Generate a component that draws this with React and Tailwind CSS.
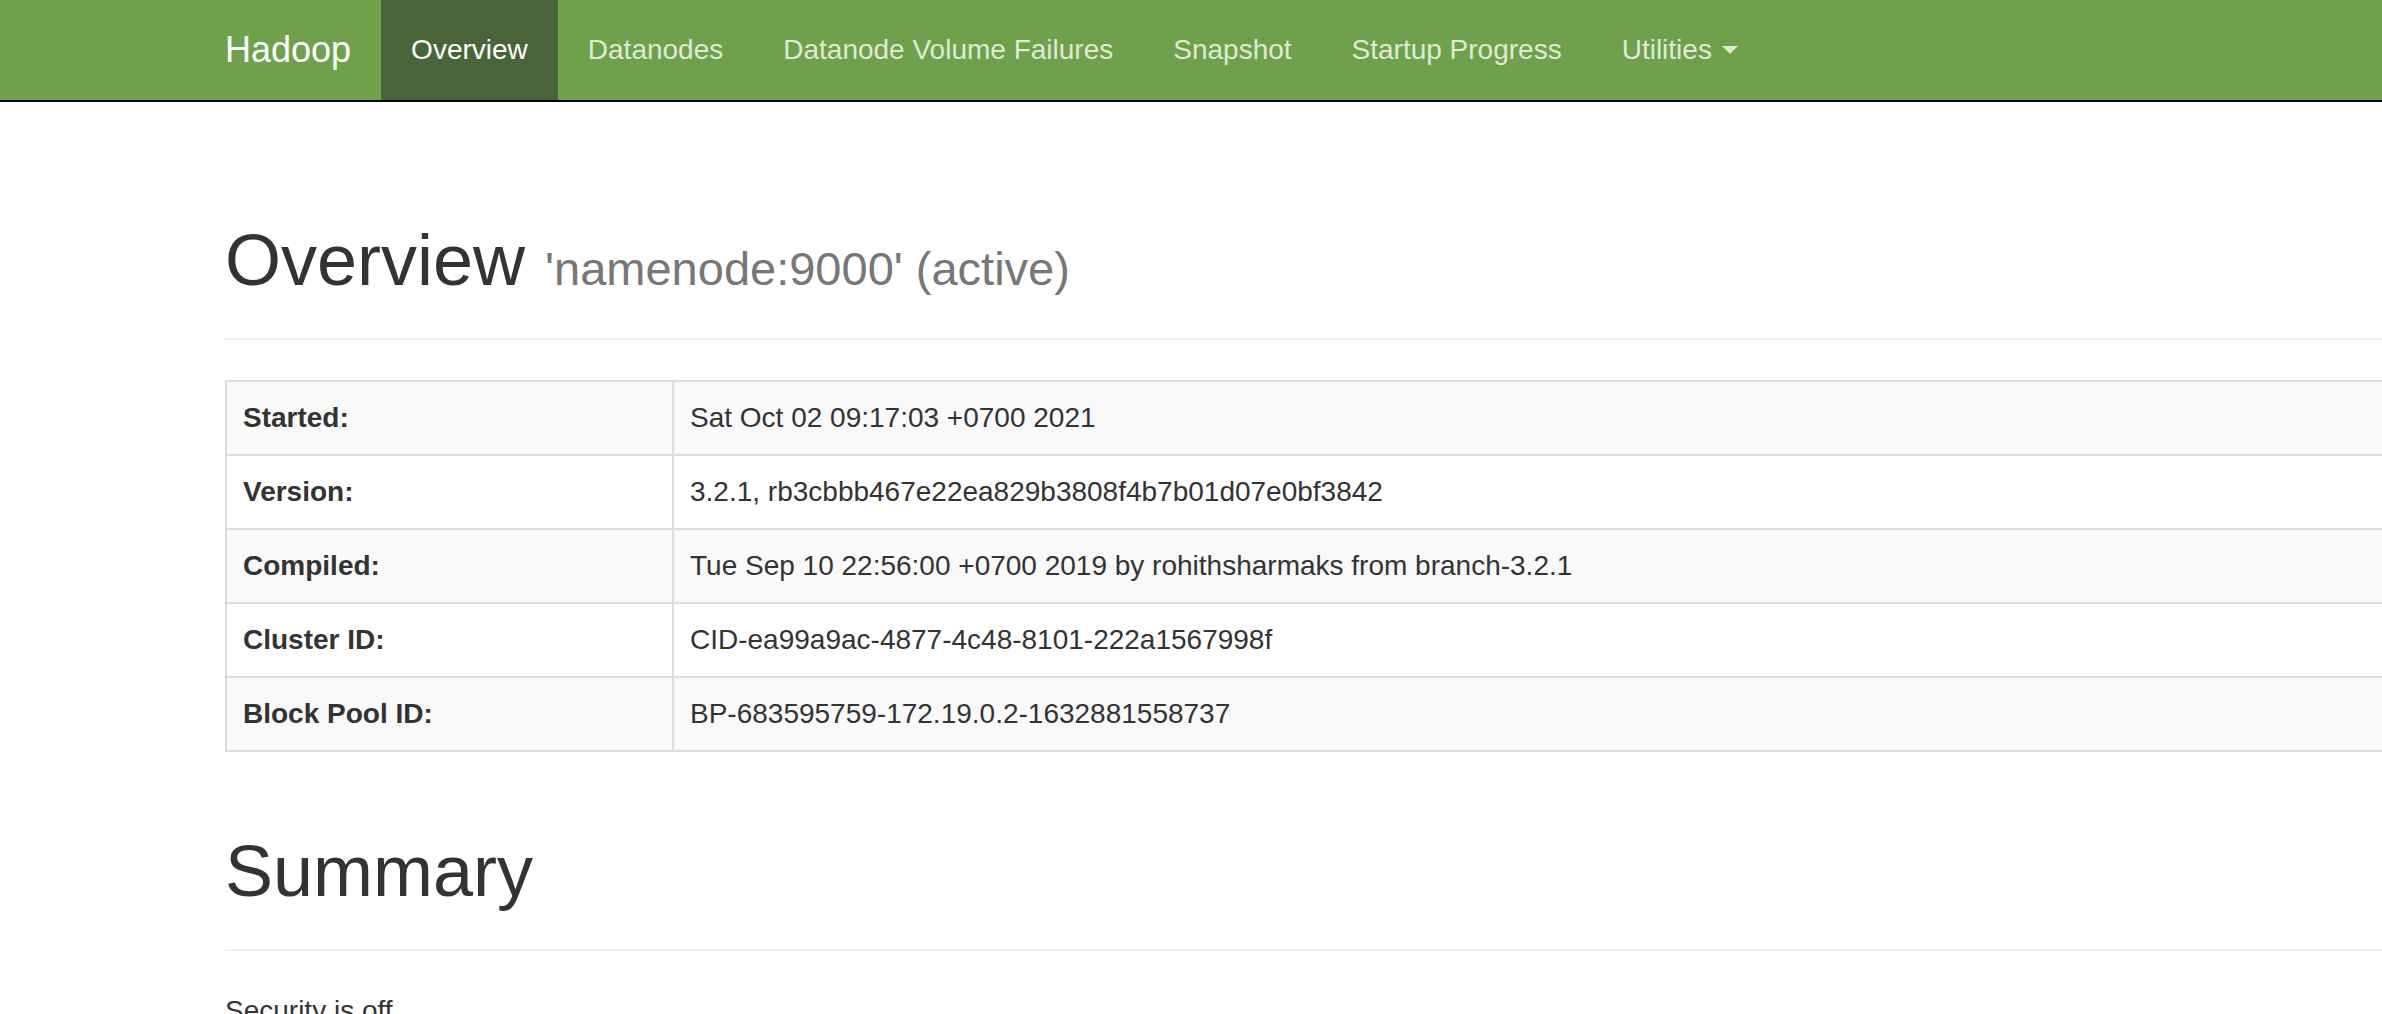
import React from 'react';

const font = "font-['Liberation_Sans',Helvetica,Arial,sans-serif]";

const navItems = [
  { label: 'Overview', active: true },
  { label: 'Datanodes' },
  { label: 'Datanode Volume Failures' },
  { label: 'Snapshot' },
  { label: 'Startup Progress' },
  { label: 'Utilities', dropdown: true },
];

const info = [
  ['Started:', 'Sat Oct 02 09:17:03 +0700 2021'],
  ['Version:', '3.2.1, rb3cbbb467e22ea829b3808f4b7b01d07e0bf3842'],
  ['Compiled:', 'Tue Sep 10 22:56:00 +0700 2019 by rohithsharmaks from branch-3.2.1'],
  ['Cluster ID:', 'CID-ea99a9ac-4877-4c48-8101-222a1567998f'],
  ['Block Pool ID:', 'BP-683595759-172.19.0.2-1632881558737'],
];

// --- NAVBAR ---
const Navbar = () => (
  <nav className="h-[102px] bg-[#6fa14c] border-b-2 border-black flex pl-[195px]">
    <a className="px-[30px] py-[30px] text-[36px] leading-[40px] text-white">Hadoop</a>
    <ul className="flex">
      {navItems.map((item) => (
        <li
          key={item.label}
          className={
            item.active
              ? 'px-[30px] py-[30px] text-[28px] leading-[40px] text-white bg-[#4a643a]'
              : 'px-[30px] py-[30px] text-[28px] leading-[40px] text-[#dfe9d5]'
          }
        >
          {item.label}
          {item.dropdown && (
            <>
              {' '}
              <span className="inline-block ml-[2px] align-middle w-0 h-0 border-x-[8px] border-x-transparent border-t-[8px] border-t-[#dfe9d5] -mt-[4px]"></span>
            </>
          )}
        </li>
      ))}
    </ul>
  </nav>
);

// --- ЗАГОЛОВОК СЕКЦИИ ---
const PageHeader = ({ children, className }) => (
  <div className={`border-b-2 border-[#eee] pb-[38px] ${className}`}>
    <h1 className="text-[72px] leading-[79px] text-[#333]">{children}</h1>
  </div>
);

export default function App() {
  return (
    <div className={`${font} h-[1014px] overflow-hidden bg-white text-[#333]`}>
      <Navbar />

      <div className="pl-[225px] w-[2500px]">
        <PageHeader className="mt-[119px]">
          Overview <small className="text-[47px] leading-none text-[#777]">'namenode:9000' (active)</small>
        </PageHeader>

        <table className="mt-[40px] w-full border-collapse text-[28px] leading-[40px]">
          <tbody>
            {info.map(([k, v], i) => (
              <tr key={k} className={i % 2 === 0 ? 'bg-[#f9f9f9]' : 'bg-white'}>
                <th className="w-[447px] border-2 border-[#ddd] px-4 py-4 text-left font-bold">{k}</th>
                <td className="border-2 border-[#ddd] px-4 py-4">{v}</td>
              </tr>
            ))}
          </tbody>
        </table>

        <PageHeader className="mt-[80px]">Summary</PageHeader>

        <p className="mt-[40px] text-[28px] leading-[40px]">Security is off.</p>
      </div>
    </div>
  );
}
